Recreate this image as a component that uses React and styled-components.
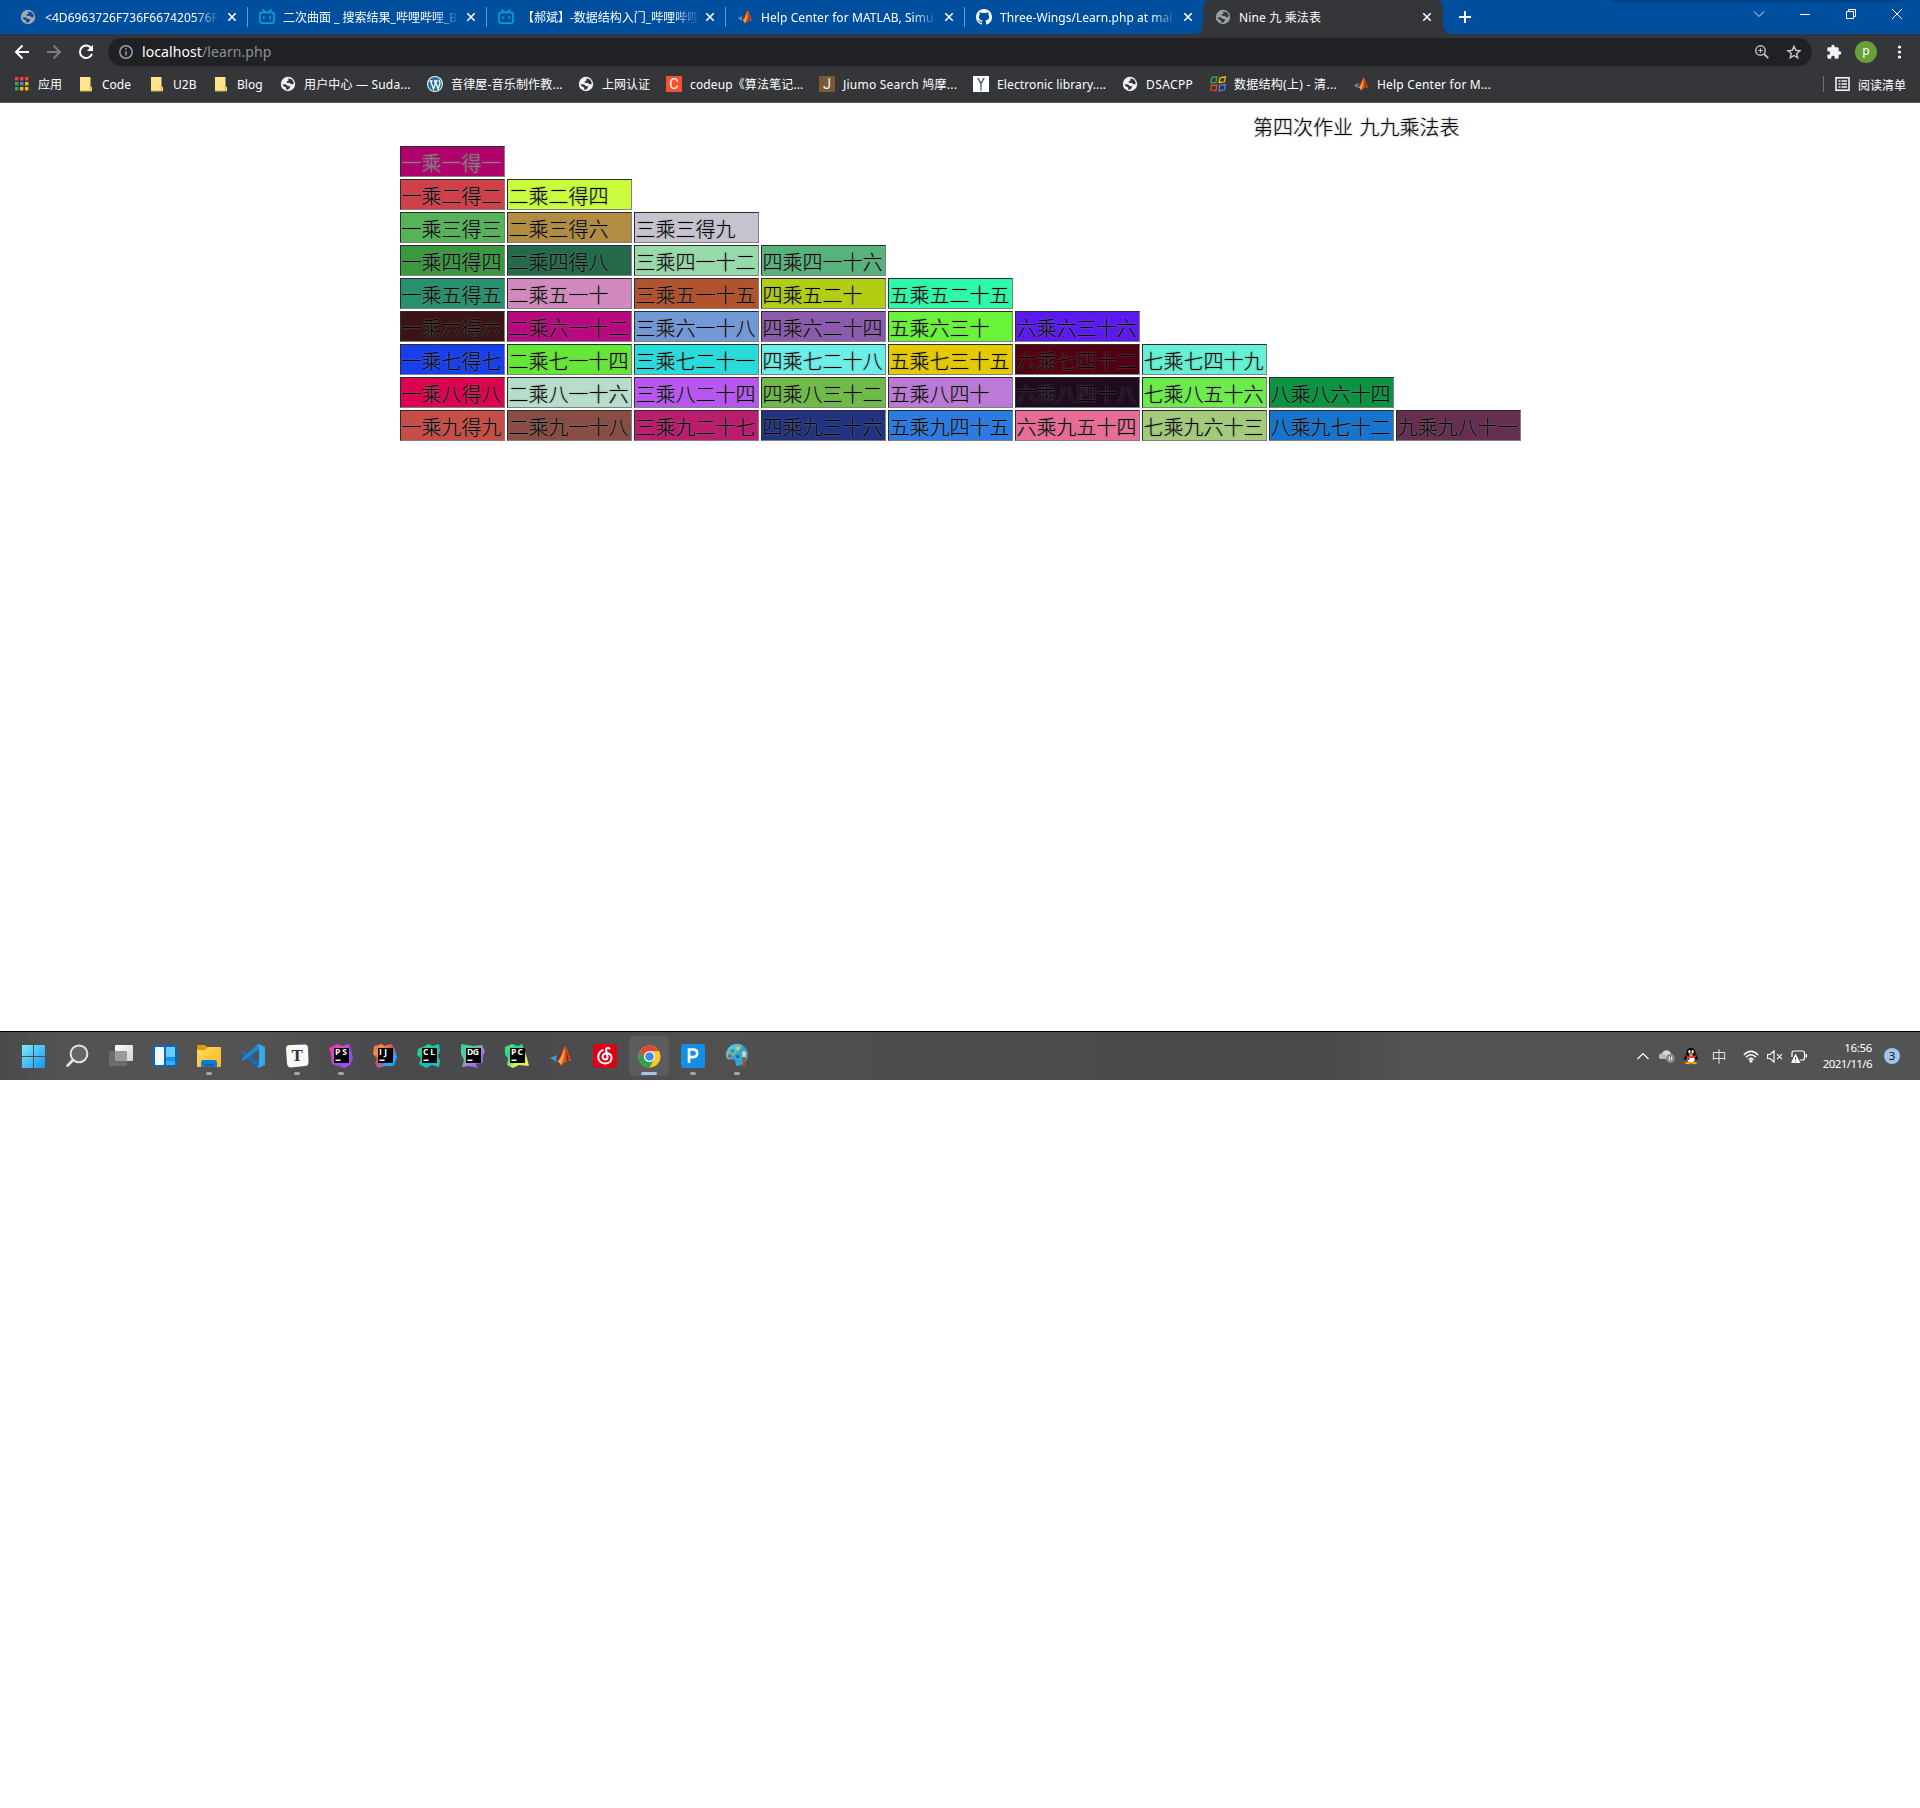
import React from 'react';
import styled, { createGlobalStyle, css } from 'styled-components';

const Global = createGlobalStyle`
  html, body { margin: 0; padding: 0; background: #fff; }
  * { box-sizing: border-box; }
  body { font-family: 'Noto Sans', 'Noto Sans CJK SC', sans-serif; }
  svg { display: block; flex: none; overflow: visible; }
`;

const Desktop = styled.div`
  width: 1920px;
  height: 1080px;
  display: flex;
  flex-direction: column;
  overflow: hidden;
`;

/* ---------- tab strip ---------- */
const TabStrip = styled.header`
  height: 34px;
  flex: none;
  display: flex;
  padding-left: 8px;
  background: linear-gradient(#003c7a, #004f9e) no-repeat 1612px 0 / 290px 3px, #004f9e;
`;

const TabBox = styled.div`
  position: relative;
  width: ${(p) => (p.$active ? 240 : 239)}px;
  height: 34px;
  display: flex;
  align-items: center;
  padding-left: 12px;
  color: #fff;
  ${(p) =>
    p.$active &&
    css`
      background: #35363a;
      border-radius: 8px 8px 0 0;
      &::before, &::after {
        content: '';
        position: absolute;
        bottom: 0;
        width: 8px;
        height: 8px;
      }
      &::before { left: -8px; background: radial-gradient(circle at 0 0, transparent 7.5px, #35363a 8px); }
      &::after { right: -8px; background: radial-gradient(circle at 100% 0, transparent 7.5px, #35363a 8px); }
    `}
  ${(p) =>
    p.$line &&
    css`
      &::after {
        content: '';
        position: absolute;
        right: -1px;
        top: 7px;
        width: 1px;
        height: 20px;
        background: #6b9bcb;
      }
    `}
`;

const TabTitle = styled.span`
  width: 177px;
  height: 20px;
  margin-left: 8px;
  padding-left: ${(p) => p.$pad || 0}px;
  line-height: 21px;
  font-size: 12px;
  letter-spacing: ${(p) => p.$ls || 0}px;
  white-space: nowrap;
  ${(p) => p.$fade && css`mask-image: linear-gradient(to right, #000 150px, transparent 177px);`}
`;

const TabClose = styled.span`
  margin-left: 6px;
`;

const NewTab = styled.div`
  margin: 11px 0 0 16px;
`;

const WindowButtons = styled.div`
  display: flex;
  align-items: center;
  gap: 36px;
  height: 28px;
  margin-left: auto;
  padding-right: 18px;
`;

/* ---------- toolbar ---------- */
const Toolbar = styled.div`
  height: 34px;
  flex: none;
  display: flex;
  align-items: center;
  padding: 2px 16px 0 14px;
  background: #35363a;
`;

const NavIcon = styled.span`
  width: 16px;
  margin-right: 16px;
`;

const Omnibox = styled.div`
  width: 1704px;
  height: 28px;
  margin-left: -2px;
  border-radius: 14px;
  background: #202124;
  display: flex;
  align-items: center;
  padding: 0 11px;
`;

const Url = styled.span`
  margin-left: 9px;
  flex: 1;
  font-size: 14px;
  line-height: 20px;
  letter-spacing: 0.09px;
  color: #fff;
  & > span { color: #8d8f93; }
`;

const OmniIcon = styled.span`
  margin-left: 18px;
`;

const Extensions = styled.span`
  margin-left: 14px;
`;

const Avatar = styled.span`
  width: 22px;
  height: 22px;
  margin: 0 21px 0 13px;
  border-radius: 50%;
  background: #689f38;
  color: #fff;
  font: 12px/20px 'Noto Sans', sans-serif;
  text-align: center;
`;

/* ---------- bookmarks ---------- */
const BookmarkBar = styled.nav`
  height: 35px;
  flex: none;
  display: flex;
  align-items: center;
  padding: 0 14px 2px 14px;
  background: #35363a;
  border-bottom: 1px solid #5d5e62;
`;

const BookmarkItem = styled.a`
  width: ${(p) => p.$w}px;
  display: flex;
  align-items: center;
  gap: 8px;
  flex: none;
  font-size: 12px;
  line-height: 18px;
  letter-spacing: ${(p) => p.$ls || 0}px;
  white-space: nowrap;
  color: #fff;
  & > span { padding-top: 2px; }
`;

const ReadingList = styled.div`
  display: flex;
  align-items: center;
  gap: 8px;
  height: 16px;
  margin-left: auto;
  padding-left: 11px;
  border-left: 1px solid #707175;
  font-size: 12px;
  color: #fff;
  & > span { padding-top: 1px; }
`;

/* ---------- page ---------- */
const Page = styled.main`
  flex: 1;
  background: #fff;
  color: #000;
  font: 300 20px/27px 'Noto Sans CJK SC', sans-serif;
  text-shadow: 0 0 2px #808080;
`;

const PageTitle = styled.div`
  height: 41px;
  padding: 10px 0 0 1253px;
  word-spacing: 2px;
`;

const Rows = styled.div`
  width: 1121px;
  margin: 2px auto 0;
  display: flex;
  flex-direction: column;
  gap: 2px;
`;

const Row = styled.div`
  display: flex;
  gap: 2px;
`;

const Cell = styled.div`
  width: ${(p) => (p.$first ? 105 : 125)}px;
  height: 31px;
  padding: 2px 1px 0;
  border: 1px solid;
  border-color: #2c2c2c #808080 #808080 #2c2c2c;
  background: ${(p) => p.$bg};
  color: ${(p) => (p.$muted ? '#808080' : '#000')};
  white-space: nowrap;
`;

/* ---------- taskbar ---------- */
const Taskbar = styled.footer`
  height: 49px;
  flex: none;
  display: flex;
  align-items: center;
  padding-left: 11px;
  border-top: 1px solid #000;
  background: linear-gradient(90deg, #4a4a4b 0, #535353 60px, #535353 240px, #4a4a4c 380px, #4a4a4c 520px, #505051 700px, #4c4c4d 1000px, #494949 1310px, #525252 1410px, #535353 100%);
`;

const TaskItem = styled.div`
  position: relative;
  width: 44px;
  height: 40px;
  display: flex;
  align-items: center;
  justify-content: center;
  ${(p) =>
    p.$active &&
    css`
      background: #5c5c5d;
      border-radius: 5px;
      width: 40px;
      margin: 0 2px;
    `}
  ${(p) =>
    p.$run &&
    css`
      &::after {
        content: '';
        position: absolute;
        bottom: 1px;
        left: 50%;
        transform: translateX(-50%);
        width: ${p.$active ? 16 : 6}px;
        height: 3px;
        border-radius: 2px;
        background: ${p.$active ? '#a0c4ea' : '#a6a6a6'};
      }
    `}
`;

const Tray = styled.div`
  display: flex;
  align-items: center;
  margin-left: auto;
  padding-right: 20px;
  color: #fff;
`;

const TrayIcon = styled.span`
  width: ${(p) => p.$w}px;
  margin-right: ${(p) => p.$gap}px;
`;

const Ime = styled.span`
  width: 16px;
  margin-right: 16px;
  font: 300 15px/20px 'Noto Sans CJK SC', sans-serif;
  text-align: center;
`;

const Clock = styled.div`
  width: 66px;
  margin-right: 12px;
  text-align: right;
  font-size: 11.5px;
  line-height: 16px;
  letter-spacing: ${(p) => p.$ls || 0}px;
  white-space: nowrap;
`;

const DateLine = styled.div`
  letter-spacing: -0.6px;
`;

const TimeLine = styled.div`
  letter-spacing: -0.35px;
`;

const Badge = styled.span`
  width: 16px;
  height: 16px;
  border-radius: 50%;
  background: #a0c4ea;
  color: #111;
  font-size: 11.5px;
  line-height: 16px;
  text-align: center;
`;

/* ---------- small icons ---------- */
const Globe = ({ color = '#f1f3f4', bg = '#35363a' }) => (
  <svg width="16" height="16" viewBox="0 0 16 16">
    <circle cx="8" cy="8" r="7.2" fill={color} />
    <path d="M2.2 8.2 6.2 8.6 7.6 10 10.4 10.2 9.4 12.2 8 13.8 6.2 13.6 6.2 11.4 4.2 10.8Z" fill={bg} />
    <path d="M8.2 2.2 12 3.4 13.8 6.4 13 8.4 11 8 9.6 6.8 7 7 6.6 5.4 8.6 4.6Z" fill={bg} />
  </svg>
);

const Bili = () => (
  <svg width="16" height="16" viewBox="0 0 16 16" fill="none" stroke="#00a1d6" strokeWidth="1.7" strokeLinecap="round">
    <rect x="0.9" y="3.4" width="14.2" height="10.8" rx="2.6" />
    <path d="M4 .8 6 3M12 .8 10 3M4.8 7.8v1.4M11.2 7.8v1.4" />
  </svg>
);

const Matlab = ({ size = 16 }) => (
  <svg width={size} height={size} viewBox="0 0 24 24">
    <path d="M1 14 8 11 11 13 7 18 5 16Z" fill="#3f9bd0" />
    <path d="M8 11 12 8 16 2 12 14 9 18 7 17Z" fill="#6b3434" />
    <path d="M16 2C18 3 20 13 23 18 20 16 18 16 12 22 11 19 10 18 8 17 12 15 13 6 16 2Z" fill="#d9541e" />
    <path d="M16 3C15 9 16 14 12 21 10 18 9 18 9 17 13 14 14 7 16 3Z" fill="#f6a03a" />
    <path d="M16 3C18 8 18 13 17 17L20 15.5C18.5 11 17.5 5 16 3Z" fill="#8f1f16" />
  </svg>
);

const GitHub = () => (
  <svg width="16" height="16" viewBox="0 0 16 16" fill="#fff">
    <path d="M8 0C3.58 0 0 3.58 0 8c0 3.54 2.29 6.53 5.47 7.59.4.07.55-.17.55-.38 0-.19-.01-.82-.01-1.49-2.01.37-2.53-.49-2.69-.94-.09-.23-.48-.94-.82-1.13-.28-.15-.68-.52-.01-.53.63-.01 1.08.58 1.23.82.72 1.21 1.87.87 2.33.66.07-.52.28-.87.51-1.07-1.78-.2-3.64-.89-3.64-3.95 0-.87.31-1.59.82-2.15-.08-.2-.36-1.02.08-2.12 0 0 .67-.21 2.2.82.64-.18 1.32-.27 2-.27s1.36.09 2 .27c1.53-1.04 2.2-.82 2.2-.82.44 1.1.16 1.92.08 2.12.51.56.82 1.27.82 2.15 0 3.07-1.87 3.75-3.65 3.95.29.25.54.73.54 1.48 0 1.07-.01 1.93-.01 2.2 0 .21.15.46.55.38A8.01 8.01 0 0 0 16 8c0-4.42-3.58-8-8-8z" />
  </svg>
);

const Apps = () => (
  <svg width="16" height="16" viewBox="0 0 16 16">
    {['#ea4335', '#ea4335', '#ea4335', '#34a853', '#4285f4', '#fbbc04', '#34a853', '#fbbc04', '#fbbc04'].map((c, i) => (
      <rect key={i} x={1 + (i % 3) * 5} y={1 + Math.floor(i / 3) * 5} width="3.4" height="3.4" fill={c} />
    ))}
  </svg>
);

const Folder = () => (
  <svg width="16" height="16" viewBox="0 0 16 16">
    <path d="M2 1h10.500v9.500l1.500.5v4H2Z" fill="#ffe38f" />
    <path d="M12.500 10.500v2.500q0 1-1 1.500M2 15h11.500" stroke="#e0ad35" fill="none" />
  </svg>
);

const WordPress = () => (
  <svg width="16" height="16" viewBox="0 0 16 16">
    <circle cx="8" cy="8" r="8" fill="#e9f3f8" />
    <circle cx="8" cy="8" r="6.900" fill="#21759b" />
    <path d="M2.500 5h3M7 5h3.600M3.600 5 6.500 13 8.400 7.600 7.500 5M8.400 5 11 13 13 7.500Q13.200 5.500 11.600 3.600" stroke="#fff" strokeWidth="1.300" fill="none" />
  </svg>
);

const LetterIcon = ({ bg, color, letter, drop }) => (
  <svg width="16" height="16" viewBox="0 0 16 16">
    <rect width="16" height="16" rx={drop ? 0.5 : 0} fill={bg} />
    <text x="8" y={drop ? 11 : 13} textAnchor="middle" fontFamily="Roboto, sans-serif" fontSize={drop ? 13 : 14.5} fill={color}>{letter}</text>
    {drop && <rect x="7" y="11" width="2" height="4" fill="#59b6d8" />}
  </svg>
);

const Course = () => (
  <svg width="16" height="16" viewBox="0 0 16 16" fill="none" strokeWidth="1.300">
    <path d="M3 1.300 6.800 .8 6 6.300 1 6.800 1.800 1.600Z" stroke="#34a853" />
    <path d="M10 1.800 15.300 .8 14.500 5.800 9 6.600Z" stroke="#fbbc04" />
    <path d="M1.300 9.400 6.800 9 6 14.800 .8 13.800Z" stroke="#ea4335" />
    <path d="M9.600 9.400 15.300 8.600 14.500 13.800 9 15Z" stroke="#4285f4" />
  </svg>
);

const Cross = () => (
  <svg width="10" height="10" viewBox="0 0 10 10">
    <path d="M1.300 1.300 8.700 8.700M8.700 1.300 1.300 8.700" stroke="#fff" strokeWidth="1.600" />
  </svg>
);

/* ---------- taskbar icons ---------- */
const Windows = () => (
  <svg width="23" height="23" viewBox="0 0 23 23">
    <defs>
      <linearGradient id="win" x1="0" y1="0" x2="23" y2="23" gradientUnits="userSpaceOnUse">
        <stop stopColor="#7deafb" />
        <stop offset="1" stopColor="#1595f0" />
      </linearGradient>
    </defs>
    <path d="M0 0h11v11H0ZM12 0h11v11H12ZM0 12h11v11H0ZM12 12h11v11H12Z" fill="url(#win)" />
  </svg>
);

const Search = () => (
  <svg width="24" height="24" viewBox="0 0 24 24" fill="none" stroke="#e4e6e8" strokeLinecap="round">
    <circle cx="14" cy="9.800" r="8.400" strokeWidth="2" fill="#666" />
    <path d="M8 16 2.600 21.600" strokeWidth="2.800" />
  </svg>
);

const TaskView = () => (
  <svg width="24" height="24" viewBox="0 0 24 24">
    <defs>
      <linearGradient id="tv" x1="0" y1="0" x2="1" y2="1">
        <stop stopColor="#fff" />
        <stop offset="1" stopColor="#d2d2d2" />
      </linearGradient>
    </defs>
    <rect x="6" y="1" width="18" height="16" rx="1" fill="url(#tv)" />
    <rect x="0" y="7" width="18" height="15" rx="1" fill="#6c6c6c" />
    <rect x="6" y="7" width="12" height="10" fill="#9b9b9b" />
  </svg>
);

const Widgets = () => (
  <svg width="24" height="22" viewBox="0 0 24 22">
    <rect width="24" height="22" rx="1" fill="#0669bd" />
    <rect x="2" y="2" width="9" height="18" rx=".8" fill="#f2f5f8" />
    <rect x="13" y="2" width="9" height="10" fill="#68cdfa" />
    <rect x="13" y="12" width="9" height="4" fill="#1794ed" />
    <rect x="13" y="16" width="9" height="4" fill="#37aef7" />
  </svg>
);

const Explorer = () => (
  <svg width="24" height="22" viewBox="0 0 24 22">
    <defs>
      <linearGradient id="ex" x1="0" y1="0" x2="1" y2="1">
        <stop stopColor="#ffda61" />
        <stop offset="1" stopColor="#f8b91d" />
      </linearGradient>
    </defs>
    <path d="M0 1Q0 0 1 0H8L11 2.500V7H0Z" fill="#dc9a08" />
    <path d="M0 5H8L11 2H23Q24 2 24 3V21Q24 22 23 22H1Q0 22 0 21Z" fill="url(#ex)" />
    <path d="M4 22V17Q4 15 6 15H18Q20 15 20 17V22Z" fill="#1479cf" />
    <path d="M7 20.500V19.500H17V20.500Z" fill="#0a4d93" />
  </svg>
);

const VSCode = () => (
  <svg width="24" height="24" viewBox="0 0 24 24">
    <path d="M0 8.500 2.200 7.200 20 20 17 24Z" fill="#0e70c0" />
    <path d="M0 15.600 2.200 17 20 4 17 0Z" fill="#1688d6" />
    <path d="M17.500 0 24 3V21L17.500 24 16.500 23 18 21V3L16.500 1Z" fill="#35a9ef" />
  </svg>
);

const Typora = () => (
  <svg width="24" height="24" viewBox="0 0 24 24">
    <path d="M1 4Q1 1 5 1L20 .5Q23 .5 23 4L23.500 18Q23.500 22 20 22L6 23.500Q3 23.500 2 20Z" fill="#f8f8f8" />
    <text x="12.200" y="17" textAnchor="middle" fontFamily="Liberation Serif, serif" fontWeight="700" fontSize="17" fill="#333">T</text>
  </svg>
);

const blobShapes = {
  PS: 'M0 4 8 0 13 2 20 0 22 6 24 13 21 21 15 24 9 22 3 20 2 10Z',
  IJ: 'M1 2 9 0 11 2 18 0 22 5 24 13 21 22 12 22 5 24 2 20 4 14 0 10Z',
  CL: 'M1 5 8 2 11 0 16 2 22 0 23 7 21 12 23 17 22 23 15 21 9 24 2 20 4 14 0 11Z',
  DG: 'M0 0 12 2 21 1 24 7 22 12 22 19 15 20 17 24 8 22 1 23 3 16 0 10Z',
  PC: 'M0 3 7 0 13 2 17 0 20 8 22 14 24 22 14 21 8 24 2 21 3 14 0 11Z',
};

const JetBrains = ({ name, colors }) => (
  <svg width="24" height="24" viewBox="0 0 24 24">
    <defs>
      <linearGradient id={`jb${name}`} x1="0" y1="0" x2="1" y2="1">
        {colors.map((c, i) => (
          <stop key={i} offset={i / (colors.length - 1)} stopColor={c} />
        ))}
      </linearGradient>
    </defs>
    <path d={blobShapes[name]} fill={`url(#jb${name})`} />
    <rect x="5" y="4" width="15" height="15" fill="#000" />
    <text x="6" y="11.200" fontFamily="Open Sans, sans-serif" fontWeight="700" fontSize="8.500" textLength={name === 'IJ' ? 8 : 12} fill="#fff">{name}</text>
    <rect x="6.500" y="15.500" width="5" height="1.500" fill="#fff" />
  </svg>
);

const NetEase = () => (
  <svg width="24" height="24" viewBox="0 0 24 24">
    <rect width="24" height="24" rx="4" fill="#e00016" />
    <path d="M16.500 4.500Q14 2.800 13 5.500L14.600 13Q14.600 15.500 12 15.500 9.600 15.200 9.600 12.800 9.800 9.700 13.200 9.200 18.600 9.200 18.600 14 18 19.400 12 19.400 5.600 19 5.200 13.200 5.400 8.200 9.800 6.200" fill="none" stroke="#fff" strokeWidth="2" strokeLinecap="round" />
  </svg>
);

const Chrome = () => (
  <svg width="23" height="23" viewBox="0 0 48 48">
    <circle cx="24" cy="24" r="23" fill="#fbc926" />
    <path d="M4.100 12.500A23 23 0 0 1 43.900 12.500H24L14 29.500Z" fill="#e5443a" />
    <path d="M4.100 12.500A23 23 0 0 0 24 47L33.900 29.800H14Z" fill="#28a34c" />
    <circle cx="24" cy="24" r="11.500" fill="#fff" />
    <circle cx="24" cy="24" r="9" fill="#4285f4" />
  </svg>
);

const PIcon = () => (
  <svg width="24" height="24" viewBox="0 0 24 24">
    <rect width="24" height="24" rx="2.500" fill="#138fe5" />
    <path d="M8 19V5.500H12.300Q16.200 5.500 16.200 9.300T12.100 13.100H8" fill="none" stroke="#fff" strokeWidth="2.600" />
  </svg>
);

const Paint = () => (
  <svg width="24" height="24" viewBox="0 0 24 24">
    <path d="M1 11A11 11 0 1 1 18 20Q15 22 12.500 22T10.500 19 8 15.500 3 15.500Q1 14 1 11Z" fill="#2ca7d8" />
    <path d="M1 11A11 11 0 0 1 12 0Q15 0 17.500 1.500L5 15.500Q1 14 1 11Z" fill="#52bfe5" />
    <circle cx="5" cy="12" r="2" fill="#d84b20" />
    <circle cx="7.500" cy="7" r="2" fill="#4f9e35" />
    <circle cx="13" cy="4.500" r="2" fill="#f3c82d" />
    <circle cx="12.500" cy="12.500" r="1.500" fill="#23628a" />
    <path d="M17 7.500H21L20.500 13H17.500Z" fill="#f3d19c" />
    <rect x="17.500" y="13" width="3" height="10" rx="1" fill="#9d5722" />
  </svg>
);

/* ---------- data ---------- */
const tabs = [
  { icon: <Globe color="#a6a8ab" bg="#004f9e" />, title: '<4D6963726F736F667420576F', ls: 0.05, pad: 1, fade: true, line: true },
  { icon: <Bili />, title: '二次曲面 _ 搜索结果_哔哩哔哩_B', fade: true, line: true },
  { icon: <Bili />, title: '【郝斌】-数据结构入门_哔哩哔哩', fade: true, line: true },
  { icon: <Matlab />, title: 'Help Center for MATLAB, Simu', ls: 0.08, fade: true, line: true },
  { icon: <GitHub />, title: 'Three-Wings/Learn.php at mai', ls: 0.04, fade: true },
  { icon: <Globe color="#9aa0a6" />, title: 'Nine 九 乘法表', ls: 0.15, active: true },
];

const bookmarks = [
  { w: 64, icon: <Apps />, text: '应用' },
  { w: 71, icon: <Folder />, text: 'Code' },
  { w: 64, icon: <Folder />, text: 'U2B' },
  { w: 67, icon: <Folder />, text: 'Blog' },
  { w: 147, icon: <Globe />, text: '用户中心 — Suda...', ls: 0.18 },
  { w: 151, icon: <WordPress />, text: '音律屋-音乐制作教...', ls: 0.18 },
  { w: 88, icon: <Globe />, text: '上网认证' },
  { w: 153, icon: <LetterIcon bg="#f9502f" color="#fff" letter="C" />, text: 'codeup《算法笔记...', ls: 0.13 },
  { w: 154, icon: <LetterIcon bg="#7b5836" color="#eee" letter="J" />, text: 'Jiumo Search 鸠摩...', ls: 0.22 },
  { w: 149, icon: <LetterIcon bg="#fff" color="#444" letter="Y" drop />, text: 'Electronic library....', ls: 0.12 },
  { w: 88, icon: <Globe />, text: 'DSACPP', ls: 0.4 },
  { w: 143, icon: <Course />, text: '数据结构(上) - 清...', ls: 0.28 },
  { w: 150, icon: <Matlab />, text: 'Help Center for M...', ls: 0.2 },
];

const table = [
  [['一乘一得一', '#b0006b']],
  [['一乘二得二', '#cf404a'], ['二乘二得四', '#c9fd3d']],
  [['一乘三得三', '#55b458'], ['二乘三得六', '#b28c40'], ['三乘三得九', '#c8c4cf']],
  [['一乘四得四', '#3a983f'], ['二乘四得八', '#23694a'], ['三乘四一十二', '#98dbab'], ['四乘四一十六', '#57b37c']],
  [['一乘五得五', '#27916d'], ['二乘五一十', '#d389bf'], ['三乘五一十五', '#b2522c'], ['四乘五二十', '#b3ce12'], ['五乘五二十五', '#2cfaa9']],
  [['一乘六得六', '#3a1414'], ['二乘六一十二', '#b8087f'], ['三乘六一十八', '#7199d8'], ['四乘六二十四', '#8b59ad'], ['五乘六三十', '#69f43a'], ['六乘六三十六', '#5a1aef']],
  [['一乘七得七', '#173fed'], ['二乘七一十四', '#65e737'], ['三乘七二十一', '#29dcdb'], ['四乘七二十八', '#6befe8'], ['五乘七三十五', '#e6ca00'], ['六乘七四十二', '#500013'], ['七乘七四十九', '#64f1d5']],
  [['一乘八得八', '#dd0350'], ['二乘八一十六', '#b8decb'], ['三乘八二十四', '#b956f2'], ['四乘八三十二', '#6ebb47'], ['五乘八四十', '#bc79d7'], ['六乘八四十八', '#1f0a1f'], ['七乘八五十六', '#6cec4b'], ['八乘八六十四', '#0b9342']],
  [['一乘九得九', '#c84d46'], ['二乘九一十八', '#884d45'], ['三乘九二十七', '#ba1c6e'], ['四乘九三十六', '#203280'], ['五乘九四十五', '#2a7be4'], ['六乘九五十四', '#e96b97'], ['七乘九六十三', '#a3cb7b'], ['八乘九七十二', '#1674cf'], ['九乘九八十一', '#662e50']],
];

const tasks = [
  { icon: <Windows /> },
  { icon: <Search /> },
  { icon: <TaskView /> },
  { icon: <Widgets /> },
  { icon: <Explorer />, run: true },
  { icon: <VSCode /> },
  { icon: <Typora />, run: true },
  { icon: <JetBrains name="PS" colors={['#ff2d80', '#e044d8', '#8a4df5', '#c04cf0']} />, run: true },
  { icon: <JetBrains name="IJ" colors={['#f06090', '#ff8a2a', '#e0406a', '#10b8ff', '#1570ff']} /> },
  { icon: <JetBrains name="CL" colors={['#20d890', '#20d090', '#10b8d0', '#20d890']} /> },
  { icon: <JetBrains name="DG" colors={['#30d890', '#5cc9a0', '#b06af0', '#5a60d8']} /> },
  { icon: <JetBrains name="PC" colors={['#58e860', '#20d890', '#d8f050', '#f4f040']} /> },
  { icon: <Matlab size={24} /> },
  { icon: <NetEase /> },
  { icon: <Chrome />, run: true, active: true },
  { icon: <PIcon />, run: true },
  { icon: <Paint />, run: true },
];

export default function App() {
  return (
    <>
      <Global />
      <Desktop>
        <TabStrip>
          {tabs.map((t) => (
            <TabBox key={t.title} $active={t.active} $line={t.line}>
              {t.icon}
              <TabTitle $fade={t.fade} $ls={t.ls} $pad={t.pad}>{t.title}</TabTitle>
              <TabClose><Cross /></TabClose>
            </TabBox>
          ))}
          <NewTab>
            <svg width="12" height="12" viewBox="0 0 12 12"><path d="M6 0V12M0 6H12" stroke="#fff" strokeWidth="2" /></svg>
          </NewTab>
          <WindowButtons>
            <svg width="10" height="10" viewBox="0 0 10 10" fill="none" stroke="#dce8f4"><path d="M0 2.500 5 7.500 10 2.500" /></svg>
            <svg width="10" height="10" viewBox="0 0 10 10"><path d="M0 5.500H10" stroke="#fff" /></svg>
            <svg width="10" height="10" viewBox="0 0 10 10" fill="none" stroke="#fff"><path d="M.5 2.500H7.500V9.500H.5ZM2.500 2.500V.5H9.500V7.500H7.500" /></svg>
            <svg width="10" height="10" viewBox="0 0 10 10" fill="none" stroke="#fff"><path d="M0 0 10 10M10 0 0 10" /></svg>
          </WindowButtons>
        </TabStrip>

        <Toolbar>
          <NavIcon>
            <svg width="16" height="16" viewBox="0 0 16 16" fill="none" stroke="#fff" strokeWidth="2"><path d="M15 8H2.500M8.500 1.500 2 8 8.500 14.500" /></svg>
          </NavIcon>
          <NavIcon>
            <svg width="16" height="16" viewBox="0 0 16 16" fill="none" stroke="#7c7d80" strokeWidth="2"><path d="M1 8H13.500M7.500 1.500 14 8 7.500 14.500" /></svg>
          </NavIcon>
          <NavIcon>
            <svg width="16" height="16" viewBox="0 0 16 16"><path d="M13.300 4.300A6.200 6.200 0 1 0 14 9.800" fill="none" stroke="#fff" strokeWidth="2" /><path d="M15 .8V7H8.800Z" fill="#fff" /></svg>
          </NavIcon>
          <Omnibox>
            <svg width="14" height="14" viewBox="0 0 14 14"><circle cx="7" cy="7" r="6.200" fill="none" stroke="#9aa0a6" strokeWidth="1.500" /><path d="M7 6.200V10.500M7 3.300V5" stroke="#9aa0a6" strokeWidth="1.500" /></svg>
            <Url>localhost<span>/learn.php</span></Url>
            <OmniIcon>
              <svg width="14" height="14" viewBox="0 0 14 14" fill="none" stroke="#bdc1c6"><circle cx="5.500" cy="5.500" r="4.700" strokeWidth="1.500" /><path d="M9 9 13.200 13.200" strokeWidth="1.900" /><path d="M5.500 3.200V7.800M3.200 5.500H7.800" strokeWidth="1.200" /></svg>
            </OmniIcon>
            <OmniIcon>
              <svg width="14" height="14" viewBox="0 0 14 14" fill="none" stroke="#c6c8ca" strokeWidth="1.400"><path d="M7 1.300 8.700 5.300 13 5.700 9.700 8.500 10.700 12.800 7 10.500 3.300 12.800 4.300 8.500 1 5.700 5.300 5.300Z" /></svg>
            </OmniIcon>
          </Omnibox>
          <Extensions>
            <svg width="16" height="16" viewBox="0 0 24 24" fill="#f1f3f4"><path d="M20.500 11H19V7c0-1.100-.9-2-2-2h-4V3.500a2.500 2.500 0 0 0-5 0V5H4c-1.100 0-2 .9-2 2v3.800h1.500a2.700 2.700 0 0 1 0 5.400H2V20c0 1.100.9 2 2 2h3.800v-1.500a2.700 2.700 0 0 1 5.400 0V22H17c1.100 0 2-.9 2-2v-4h1.500a2.500 2.500 0 0 0 0-5z" /></svg>
          </Extensions>
          <Avatar>p</Avatar>
          <svg width="3" height="14" viewBox="0 0 3 14" fill="#fff"><circle cx="1.500" cy="2" r="1.600" /><circle cx="1.500" cy="7" r="1.600" /><circle cx="1.500" cy="12" r="1.600" /></svg>
        </Toolbar>

        <BookmarkBar>
          {bookmarks.map((b) => (
            <BookmarkItem key={b.text} $w={b.w} $ls={b.ls}>{b.icon}<span>{b.text}</span></BookmarkItem>
          ))}
          <ReadingList>
            <svg width="15" height="14" viewBox="0 0 15 14" fill="none" stroke="#f1f3f4"><rect x="1" y=".8" width="13" height="12.400" strokeWidth="1.600" /><path d="M3.500 4H5.500M3.500 7H5.500M3.500 10H5.500M6.500 4H12M6.500 7H12M6.500 10H12" strokeWidth="1.500" /></svg>
            <span>阅读清单</span>
          </ReadingList>
        </BookmarkBar>

        <Page>
          <PageTitle>第四次作业 九九乘法表</PageTitle>
          <Rows>
            {table.map((row, r) => (
              <Row key={r}>
                {row.map(([text, bg], c) => (
                  <Cell key={text} $bg={bg} $first={c === 0} $muted={r === 0}>{text}</Cell>
                ))}
              </Row>
            ))}
          </Rows>
        </Page>

        <Taskbar>
          {tasks.map((t, i) => (
            <TaskItem key={i} $run={t.run} $active={t.active}>{t.icon}</TaskItem>
          ))}
          <Tray>
            <TrayIcon $w={12} $gap={10}>
              <svg width="12" height="8" viewBox="0 0 12 8"><path d="M.5 7 6 1.500 11.500 7" fill="none" stroke="#fff" strokeWidth="1.200" /></svg>
            </TrayIcon>
            <TrayIcon $w={16} $gap={8}>
              <svg width="16" height="14" viewBox="0 0 16 14">
                <path d="M3 10Q0 10 0 7.200 0 5 3 4.500 4.500 1 8 1.200 11 1.500 12 4.500 14 5 14 7L10 10Z" fill="#d9d9d9" />
                <path d="M3 10Q0 10 0 7.200 0 5 3 4.500 7 4 8 10Z" fill="#b9b9b9" />
                <circle cx="11.500" cy="9.500" r="4.500" fill="#858585" />
                <path d="M10.300 7.500V11.500M12.700 7.500V11.500" stroke="#fff" />
              </svg>
            </TrayIcon>
            <TrayIcon $w={16} $gap={12}>
              <svg width="16" height="16" viewBox="0 0 16 16">
                <path d="M3.500 5Q3.500 0 8 0T12.500 5L15 10.500 14 12 12.500 11 11 15H5L3.500 11 2 12 1 10.500Z" fill="#080808" />
                <ellipse cx="8" cy="11" rx="3.700" ry="3.800" fill="#fff" />
                <ellipse cx="6.400" cy="3.500" rx="1.100" ry="1.500" fill="#fff" /><ellipse cx="9.600" cy="3.500" rx="1.100" ry="1.500" fill="#fff" />
                <ellipse cx="8" cy="5.800" rx="2.400" ry=".9" fill="#f6a400" />
                <path d="M3 7Q8 9.500 13 7V9Q8 10.500 6.500 9.600V12H4.500V9L3 8.500Z" fill="#e3202a" />
                <ellipse cx="5" cy="15" rx="3" ry="1.200" fill="#f6a400" /><ellipse cx="11" cy="15" rx="3" ry="1.200" fill="#f6a400" />
              </svg>
            </TrayIcon>
            <Ime>中</Ime>
            <TrayIcon $w={16} $gap={8}>
              <svg width="16" height="13" viewBox="0 0 16 13" fill="none" stroke="#fff" strokeWidth="1.300"><path d="M.8 5Q8-2.500 15.200 5M3 7.300Q8 2.200 13 7.300M5.300 9.600Q8 7 10.700 9.600" /><circle cx="8" cy="11" r="1" fill="#fff" /></svg>
            </TrayIcon>
            <TrayIcon $w={16} $gap={8}>
              <svg width="16" height="13" viewBox="0 0 16 13" fill="none" stroke="#fff"><path d="M.6 4.500H3L7 1V12L3 8.500H.6ZM10 4.200 15 9.200M15 4.200 10 9.200" strokeWidth="1.100" /></svg>
            </TrayIcon>
            <TrayIcon $w={16} $gap={-1}>
              <svg width="16" height="14" viewBox="0 0 16 14"><path d="M1 8V4Q1 2 3 2H11.500Q13.500 2 13.500 4V9Q13.500 11 11.500 11H9" fill="none" stroke="#fff" strokeWidth="1.200" /><path d="M14.500 5H16V8.500H14.500ZM4.500 4.500 9.500 14H0Z" fill="#fff" /><path d="M4.700 8V11M4.700 12V13" stroke="#555" /></svg>
            </TrayIcon>
            <Clock>
              <TimeLine>16:56</TimeLine>
              <DateLine>2021/11/6</DateLine>
            </Clock>
            <Badge>3</Badge>
          </Tray>
        </Taskbar>
      </Desktop>
    </>
  );
}
